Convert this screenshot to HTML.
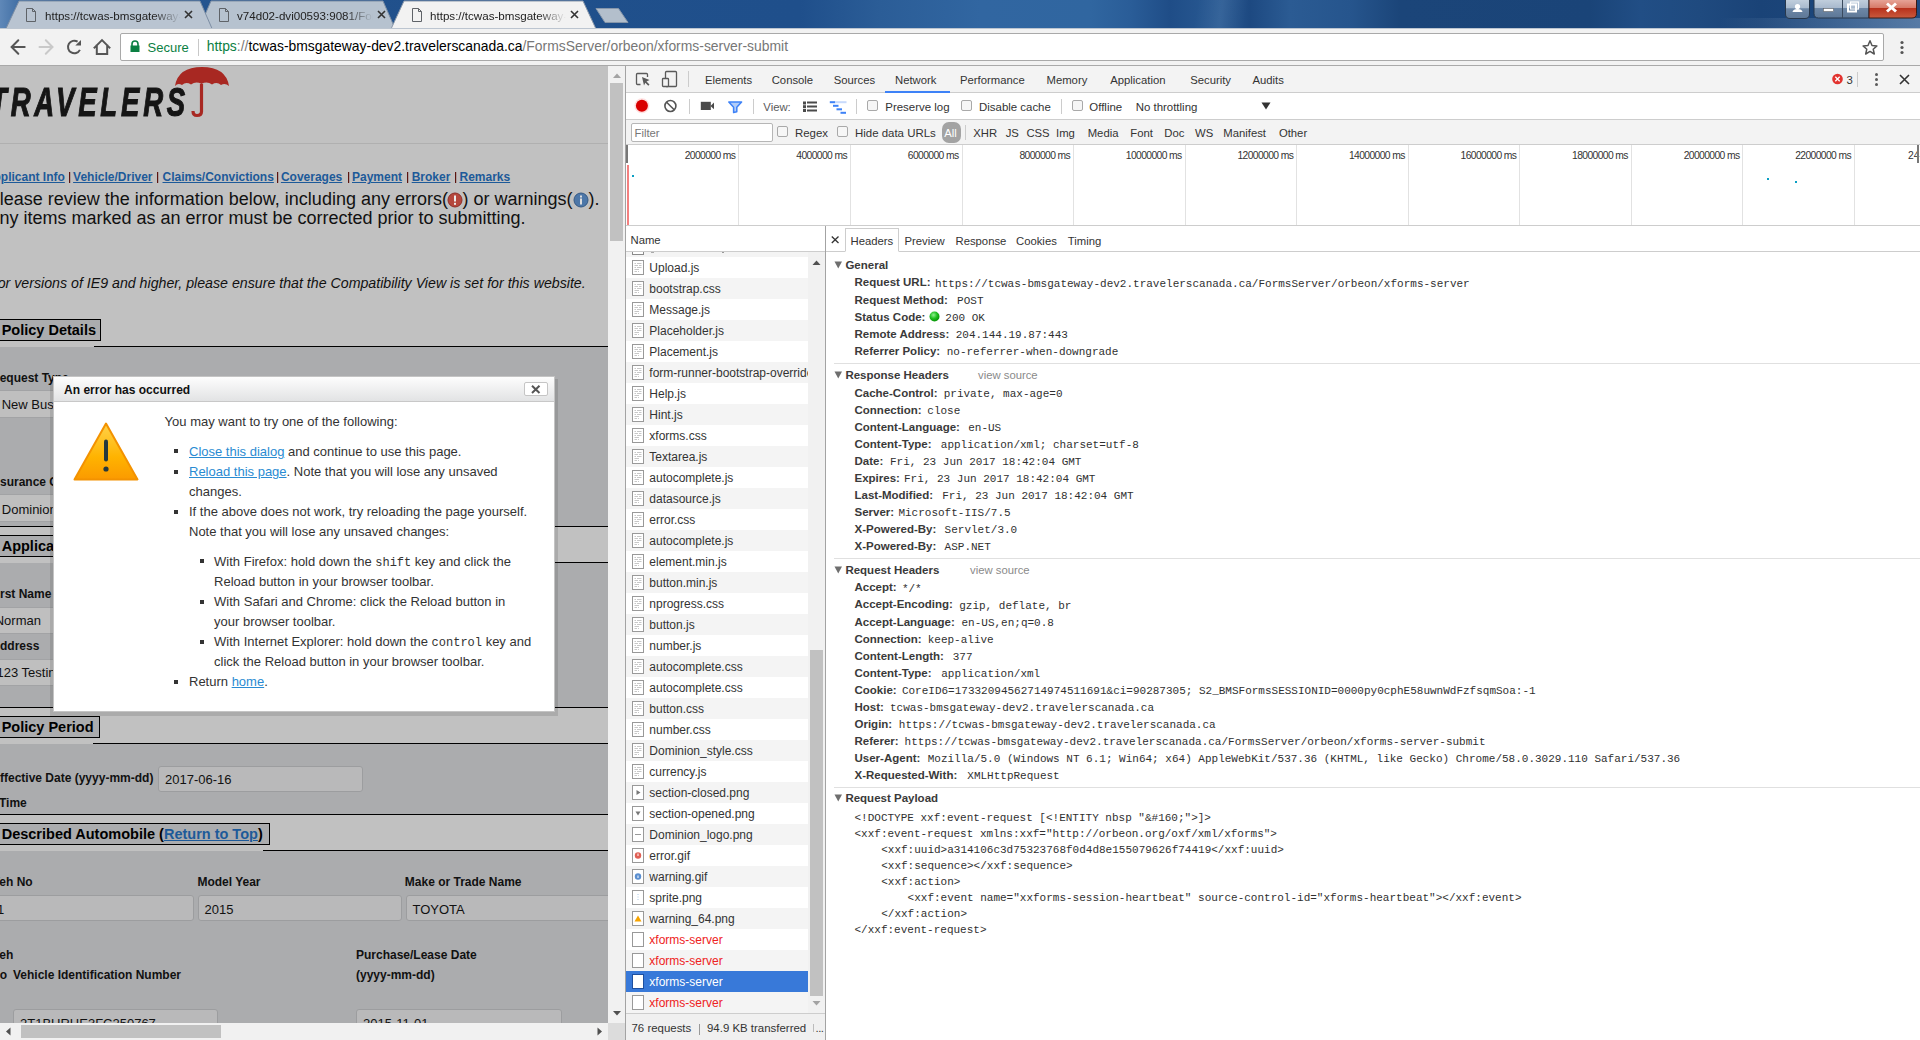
<!DOCTYPE html>
<html><head><meta charset="utf-8"><style>
html,body{margin:0;padding:0;}
body{width:1920px;height:1040px;overflow:hidden;position:relative;background:#fff;font-family:'Liberation Sans', sans-serif;}
body div{position:absolute;box-sizing:border-box;}
.t{white-space:pre;}
svg{position:absolute;overflow:visible;}
</style></head><body>
<div style="left:0px;top:0px;width:1920px;height:29px;background:linear-gradient(90deg,#5f88b8 0px,#3f6da3 20px,#2a5a94 60px,#21518c 300px,#1f4f8b 800px,#2b5d97 880px,#3166a1 980px,#3066a0 1090px,#2a5d98 1130px,#1f4d87 1170px,#2a5b94 1220px,#1d4981 1250px,#2b5b93 1290px,#26558d 1350px,#1b4579 1400px,#1a4478 1590px,#214e85 1640px,#1f4a7f 1700px,#1a4377 1760px,#1e4a80 1920px);"></div>
<div style="left:0px;top:0px;width:1920px;height:29px;background:linear-gradient(100deg,rgba(255,255,255,0) 0px,rgba(255,255,255,0) 1180px,rgba(255,255,255,.06) 1205px,rgba(255,255,255,0) 1230px);"></div>
<div style="left:1720px;top:18px;width:200px;height:11px;background:linear-gradient(90deg,rgba(120,150,185,0),rgba(125,155,190,.6));"></div>
<svg style="left:0;top:0" width="800" height="30">
<polygon points="199,28.5 211,1 383,1 395,28.5" fill="#b6c2cf" stroke="#7d8ea4" stroke-width="1"/>
<polygon points="6,28.5 19,1 200,1 212,28.5" fill="#b9c4d1" stroke="#7d8ea4" stroke-width="1"/>
<polygon points="391,29 404,1 583,1 596,29" fill="#f2f2f2" stroke="#8a98aa" stroke-width="1"/>
<polygon points="596,8.5 618.5,8.5 628,22.5 605,22.5" fill="#b3bfcc" stroke="#8797ab" stroke-width="1" stroke-linejoin="round"/>
</svg>
<svg style="left:25px;top:8px" width="12" height="14"><path d="M1.5,0.5 H7.5 L10.5,3.5 V13.5 H1.5 Z M7.5,0.5 V3.5 H10.5" fill="none" stroke="#5f6368" stroke-width="1"/></svg>
<svg style="left:218px;top:8px" width="12" height="14"><path d="M1.5,0.5 H7.5 L10.5,3.5 V13.5 H1.5 Z M7.5,0.5 V3.5 H10.5" fill="none" stroke="#5f6368" stroke-width="1"/></svg>
<svg style="left:411px;top:8px" width="12" height="14"><path d="M1.5,0.5 H7.5 L10.5,3.5 V13.5 H1.5 Z M7.5,0.5 V3.5 H10.5" fill="none" stroke="#5f6368" stroke-width="1"/></svg>
<div class="t" style="left:45px;top:10.38px;font-size:11.6px;line-height:11.6px;color:#222;font-weight:400;font-family:'Liberation Sans', sans-serif;width:136px;height:16px;overflow:hidden;-webkit-mask-image:linear-gradient(90deg,#000 0,#000 108px,transparent 136px);">https://tcwas-bmsgateway-dev2</div>
<div class="t" style="left:237px;top:10.38px;font-size:11.6px;line-height:11.6px;color:#222;font-weight:400;font-family:'Liberation Sans', sans-serif;width:136px;height:16px;overflow:hidden;-webkit-mask-image:linear-gradient(90deg,#000 0,#000 108px,transparent 136px);">v74d02-dvi00593:9081/FormsServer</div>
<div class="t" style="left:430px;top:10.38px;font-size:11.6px;line-height:11.6px;color:#222;font-weight:400;font-family:'Liberation Sans', sans-serif;width:136px;height:16px;overflow:hidden;-webkit-mask-image:linear-gradient(90deg,#000 0,#000 108px,transparent 136px);">https://tcwas-bmsgateway-dev2</div>
<svg style="left:184px;top:10px" width="10" height="10"><path d="M1,1 L8,8 M8,1 L1,8" stroke="#333" stroke-width="1.6"/></svg>
<svg style="left:377px;top:10px" width="10" height="10"><path d="M1,1 L8,8 M8,1 L1,8" stroke="#333" stroke-width="1.6"/></svg>
<svg style="left:570px;top:10px" width="10" height="10"><path d="M1,1 L8,8 M8,1 L1,8" stroke="#333" stroke-width="1.6"/></svg>
<svg style="left:1784px;top:0" width="136" height="20">
<defs>
<linearGradient id="wb" x1="0" y1="0" x2="0" y2="1"><stop offset="0" stop-color="#c3d0de"/><stop offset=".45" stop-color="#a9bace"/><stop offset=".5" stop-color="#6d87a6"/><stop offset="1" stop-color="#5d7796"/></linearGradient>
<linearGradient id="wr" x1="0" y1="0" x2="0" y2="1"><stop offset="0" stop-color="#e8a89c"/><stop offset=".45" stop-color="#d77b69"/><stop offset=".5" stop-color="#b8321c"/><stop offset="1" stop-color="#c95a3e"/></linearGradient>
</defs>
<path d="M1.5,-1 V14 Q1.5,18.5 6,18.5 H21 Q25.5,18.5 25.5,14 V-1" fill="url(#wb)" stroke="#28384c" stroke-width="1"/>
<path d="M30,-1 V13.5 Q30,18 34.5,18 H85 V-1 Z" fill="url(#wb)" stroke="#28384c" stroke-width="1"/>
<path d="M85,-1 V18 H128 Q132.5,18 132.5,13.5 V-1 Z" fill="url(#wr)" stroke="#3b1a14" stroke-width="1"/>
<line x1="58.5" y1="0" x2="58.5" y2="18" stroke="#3a4a5e" stroke-width="1"/>
<circle cx="13.5" cy="6.5" r="2.6" fill="#fff"/><path d="M8.5,12 Q9,9 13.5,9 Q18,9 18.5,12 Z" fill="#fff"/>
<rect x="39.5" y="8.5" width="10" height="3" fill="#fff" stroke="#555" stroke-width=".5"/>
<rect x="64" y="4.5" width="8" height="7" fill="none" stroke="#fff" stroke-width="2"/>
<rect x="66.5" y="2" width="8" height="7" fill="none" stroke="#fff" stroke-width="1.2"/>
<path d="M103,3.5 L112,11.5 M112,3.5 L103,11.5" stroke="#fff" stroke-width="3"/>
</svg>
<div style="left:0px;top:28px;width:1920px;height:38px;background:#f2f2f2;border-top:1px solid #bcc5d0;border-bottom:1px solid #a9a9a9;"></div>
<svg style="left:0;top:28px" width="120" height="38">
<path d="M24.7,19 H12 M18.3,12.3 L11.6,19 L18.3,25.7" stroke="#555" stroke-width="2" fill="none" stroke-linecap="round"/>
<path d="M39.5,19 H52.3 M45.8,12.3 L52.5,19 L45.8,25.7" stroke="#c9c9c9" stroke-width="2" fill="none" stroke-linecap="round"/>
<path d="M79.9,21.9 A6.3,6.3 0 1 1 77.6,13.6" stroke="#555" stroke-width="2" fill="none"/><path d="M75.3,17.6 L81,11.9 L81,17.6 Z" fill="#555"/>
<path d="M94.5,19.6 L102,12.1 L109.5,19.6 M96.8,17.6 V26 H107.2 V17.6" stroke="#555" stroke-width="2" fill="none" stroke-linejoin="miter" stroke-linecap="square"/>
</svg>
<div style="left:120px;top:33px;width:1763.5px;height:28px;background:#fff;border:1px solid #a9a9a9;border-radius:2px;"></div>
<svg style="left:129px;top:40px" width="12" height="13"><path d="M3,6 V4 A3,3 0 0 1 9,4 V6" stroke="#0b8043" stroke-width="1.6" fill="none"/><rect x="1.5" y="5.5" width="9" height="6.5" fill="#0b8043"/></svg>
<div class="t" style="left:147.5px;top:40.99px;font-size:13px;line-height:13px;color:#0b8043;font-weight:400;font-family:'Liberation Sans', sans-serif;">Secure</div>
<div style="left:198px;top:39px;width:1px;height:17px;background:#c8c8c8;"></div>
<div class="t" style="left:206.7px;top:40.23px;font-size:13.9px;line-height:13.9px;color:#000;"><span style="color:#0b8043">https</span><span style="color:#777">://</span>tcwas-bmsgateway-dev2.travelerscanada.ca<span style="color:#777">/FormsServer/orbeon/xforms-server-submit</span></div>
<svg style="left:1860px;top:38px" width="20" height="20"><path d="M10,2.8 L12,7.5 L16.9,7.9 L13.2,11.2 L14.3,16 L10,13.4 L5.7,16 L6.8,11.2 L3.1,7.9 L8,7.5 Z" fill="none" stroke="#555" stroke-width="1.5" stroke-linejoin="round"/></svg>
<svg style="left:1898.4px;top:38px" width="8" height="18"><circle cx="4" cy="4.5" r="1.6" fill="#555"/><circle cx="4" cy="9.5" r="1.6" fill="#555"/><circle cx="4" cy="14.5" r="1.6" fill="#555"/></svg>
<div style="left:0px;top:66px;width:608px;height:957px;background:#c1c1c1;overflow:hidden;"></div>
<div class="t" style="left:-10px;top:82.41px;font-size:40.5px;line-height:40.5px;color:#151515;font-weight:700;font-family:'Liberation Sans', sans-serif;transform:scaleX(0.68);transform-origin:0 0;letter-spacing:5.6px;font-style:italic;-webkit-text-stroke:1.1px #151515;">TRAVELERS</div>
<svg style="left:170px;top:64px" width="62" height="56">
<path d="M5,22 Q8,3 32,3 Q56,3 59,22 Q55,18.5 51,21 Q47,17.5 42,20.5 Q37,17 31.5,20 Q26,17 21,20.5 Q16,17.5 12,21 Q8,18.5 5,22 Z" fill="#a82822"/>
<path d="M31.5,20 V47.5 Q31.5,51.5 27,51.5 Q23,51.5 23,47" fill="none" stroke="#a82822" stroke-width="3.2"/>
</svg>
<div style="left:0px;top:143px;width:608px;height:1px;background:#b0b0b0;"></div>
<div class="t" style="left:-15.2px;top:170.84px;font-size:12px;line-height:12px;color:#1d5a99;font-weight:700;font-family:'Liberation Sans', sans-serif;text-decoration:underline;">Applicant Info</div>
<div class="t" style="left:73.1px;top:170.84px;font-size:12px;line-height:12px;color:#1d5a99;font-weight:700;font-family:'Liberation Sans', sans-serif;text-decoration:underline;">Vehicle/Driver</div>
<div class="t" style="left:162.5px;top:170.84px;font-size:12px;line-height:12px;color:#1d5a99;font-weight:700;font-family:'Liberation Sans', sans-serif;text-decoration:underline;">Claims/Convictions</div>
<div class="t" style="left:280.9px;top:170.84px;font-size:12px;line-height:12px;color:#1d5a99;font-weight:700;font-family:'Liberation Sans', sans-serif;text-decoration:underline;">Coverages</div>
<div class="t" style="left:352px;top:170.84px;font-size:12px;line-height:12px;color:#1d5a99;font-weight:700;font-family:'Liberation Sans', sans-serif;text-decoration:underline;">Payment</div>
<div class="t" style="left:411.7px;top:170.84px;font-size:12px;line-height:12px;color:#1d5a99;font-weight:700;font-family:'Liberation Sans', sans-serif;text-decoration:underline;">Broker</div>
<div class="t" style="left:459.5px;top:170.84px;font-size:12px;line-height:12px;color:#1d5a99;font-weight:700;font-family:'Liberation Sans', sans-serif;text-decoration:underline;">Remarks</div>
<div style="left:69px;top:172px;width:1px;height:11px;background:#5c1510;box-shadow:0.6px 0 0 rgba(92,21,16,.35);"></div>
<div style="left:157px;top:172px;width:1px;height:11px;background:#5c1510;box-shadow:0.6px 0 0 rgba(92,21,16,.35);"></div>
<div style="left:277px;top:172px;width:1px;height:11px;background:#5c1510;box-shadow:0.6px 0 0 rgba(92,21,16,.35);"></div>
<div style="left:348px;top:172px;width:1px;height:11px;background:#5c1510;box-shadow:0.6px 0 0 rgba(92,21,16,.35);"></div>
<div style="left:407px;top:172px;width:1px;height:11px;background:#5c1510;box-shadow:0.6px 0 0 rgba(92,21,16,.35);"></div>
<div style="left:455px;top:172px;width:1px;height:11px;background:#5c1510;box-shadow:0.6px 0 0 rgba(92,21,16,.35);"></div>
<div class="t" style="left:-12.3px;top:189.96px;font-size:18px;line-height:18px;color:#111;font-weight:400;font-family:'Liberation Sans', sans-serif;">Please review the information below, including any errors(</div>
<svg style="left:447px;top:192px" width="16" height="16"><circle cx="8" cy="8" r="7" fill="#b5473d" stroke="#8e2f28"/><rect x="7" y="3.5" width="2" height="6" fill="#eee"/><rect x="7" y="10.8" width="2" height="2" fill="#eee"/></svg>
<div class="t" style="left:462.5px;top:189.96px;font-size:18px;line-height:18px;color:#111;font-weight:400;font-family:'Liberation Sans', sans-serif;">) or warnings(</div>
<svg style="left:573px;top:192px" width="16" height="16"><circle cx="8" cy="8" r="7" fill="#4d77a8" stroke="#365a84"/><rect x="7" y="6.5" width="2" height="6" fill="#ddd"/><rect x="7" y="3.5" width="2" height="2" fill="#ddd"/></svg>
<div class="t" style="left:588.5px;top:189.96px;font-size:18px;line-height:18px;color:#111;font-weight:400;font-family:'Liberation Sans', sans-serif;">).</div>
<div class="t" style="left:-12.6px;top:209.46px;font-size:18px;line-height:18px;color:#111;font-weight:400;font-family:'Liberation Sans', sans-serif;">Any items marked as an error must be corrected prior to submitting.</div>
<div class="t" style="left:-11px;top:276.18px;font-size:14.2px;line-height:14.2px;color:#111;font-weight:400;font-family:'Liberation Sans', sans-serif;font-style:italic;">For versions of IE9 and higher, please ensure that the Compatibility View is set for this website.</div>
<div style="left:-2px;top:319px;width:103px;height:22px;background:#abacae;border:1px solid #000;"></div>
<div class="t" style="left:1.7px;top:323.02px;font-size:14.5px;line-height:14.5px;color:#000;font-weight:700;font-family:'Liberation Sans', sans-serif;">Policy Details</div>
<div style="left:94px;top:346px;width:514px;height:1px;background:#000;"></div>
<div style="left:0px;top:347px;width:608px;height:179.5px;background:#abacae;"></div>
<div class="t" style="left:-9px;top:371.84px;font-size:12px;line-height:12px;color:#111;font-weight:700;font-family:'Liberation Sans', sans-serif;">Request Type</div>
<div style="left:0px;top:390px;width:540px;height:1px;background:#a2a3a5;"></div>
<div style="left:0px;top:391px;width:540px;height:26.5px;background:#bfbfbf;"></div>
<div class="t" style="left:1.7px;top:398.09px;font-size:13px;line-height:13px;color:#111;font-weight:400;font-family:'Liberation Sans', sans-serif;">New Business</div>
<div style="left:0px;top:417px;width:540px;height:1px;background:#a2a3a5;"></div>
<div class="t" style="left:-10.7px;top:475.54px;font-size:12px;line-height:12px;color:#111;font-weight:700;font-family:'Liberation Sans', sans-serif;">Insurance Company</div>
<div style="left:0px;top:494px;width:540px;height:1px;background:#a2a3a5;"></div>
<div style="left:0px;top:495px;width:540px;height:26px;background:#bfbfbf;"></div>
<div class="t" style="left:1.8px;top:502.69px;font-size:13px;line-height:13px;color:#111;font-weight:400;font-family:'Liberation Sans', sans-serif;">Dominion of Canada</div>
<div style="left:0px;top:520.5px;width:540px;height:1px;background:#a2a3a5;"></div>
<div style="left:0px;top:526px;width:608px;height:1px;background:#000;"></div>
<div style="left:-2px;top:535px;width:202px;height:22px;background:#abacae;border:1px solid #000;"></div>
<div class="t" style="left:1.7px;top:539.02px;font-size:14.5px;line-height:14.5px;color:#000;font-weight:700;font-family:'Liberation Sans', sans-serif;">Applicant Information</div>
<div style="left:193px;top:562px;width:415px;height:1px;background:#000;"></div>
<div style="left:0px;top:563px;width:608px;height:144px;background:#abacae;"></div>
<div style="left:554px;top:562px;width:54px;height:1px;background:#000;"></div>
<div class="t" style="left:-10.7px;top:588.44px;font-size:12px;line-height:12px;color:#111;font-weight:700;font-family:'Liberation Sans', sans-serif;">First Name</div>
<div style="left:0px;top:606.5px;width:540px;height:1px;background:#a2a3a5;"></div>
<div style="left:0px;top:607.5px;width:540px;height:25.5px;background:#bfbfbf;"></div>
<div class="t" style="left:-5.3px;top:614.09px;font-size:13px;line-height:13px;color:#111;font-weight:400;font-family:'Liberation Sans', sans-serif;">Norman</div>
<div style="left:0px;top:633px;width:540px;height:1px;background:#a2a3a5;"></div>
<div class="t" style="left:-8.67px;top:639.74px;font-size:12px;line-height:12px;color:#111;font-weight:700;font-family:'Liberation Sans', sans-serif;">Address</div>
<div style="left:0px;top:658.5px;width:540px;height:1px;background:#a2a3a5;"></div>
<div style="left:0px;top:659.5px;width:540px;height:25.5px;background:#bfbfbf;"></div>
<div class="t" style="left:-3.5px;top:665.99px;font-size:13px;line-height:13px;color:#111;font-weight:400;font-family:'Liberation Sans', sans-serif;">123 Testing Street</div>
<div style="left:0px;top:685px;width:540px;height:1px;background:#a2a3a5;"></div>
<div style="left:0px;top:707px;width:608px;height:1px;background:#000;"></div>
<div style="left:-2px;top:716px;width:102px;height:22px;background:#abacae;border:1px solid #000;"></div>
<div class="t" style="left:1.7px;top:720.02px;font-size:14.5px;line-height:14.5px;color:#000;font-weight:700;font-family:'Liberation Sans', sans-serif;">Policy Period</div>
<div style="left:93px;top:743px;width:515px;height:1px;background:#000;"></div>
<div style="left:0px;top:744px;width:608px;height:70px;background:#abacae;"></div>
<div class="t" style="left:-8px;top:772.14px;font-size:12px;line-height:12px;color:#111;font-weight:700;font-family:'Liberation Sans', sans-serif;">Effective Date (yyyy-mm-dd)</div>
<div style="left:158.4px;top:765.7px;width:204.6px;height:26.3px;background:#b9b9ba;border:1px solid #9c9d9f;border-radius:3px;"></div>
<div class="t" style="left:165px;top:773.19px;font-size:13px;line-height:13px;color:#111;font-weight:400;font-family:'Liberation Sans', sans-serif;">2017-06-16</div>
<div class="t" style="left:-1px;top:796.84px;font-size:12px;line-height:12px;color:#111;font-weight:700;font-family:'Liberation Sans', sans-serif;">Time</div>
<div style="left:0px;top:814px;width:608px;height:1px;background:#000;"></div>
<div style="left:-2px;top:823px;width:272px;height:22px;background:#abacae;border:1px solid #000;"></div>
<div class="t" style="left:1.7px;top:827.02px;font-size:14.5px;line-height:14.5px;color:#000;font-weight:700;font-family:'Liberation Sans', sans-serif;">Described Automobile (<span style="color:#1d5a99;text-decoration:underline">Return to Top</span>)</div>
<div style="left:263px;top:850px;width:345px;height:1px;background:#000;"></div>
<div style="left:0px;top:851px;width:608px;height:172px;background:#abacae;"></div>
<div class="t" style="left:-8px;top:876.04px;font-size:12px;line-height:12px;color:#111;font-weight:700;font-family:'Liberation Sans', sans-serif;">Veh No</div>
<div class="t" style="left:197.4px;top:876.04px;font-size:12px;line-height:12px;color:#111;font-weight:700;font-family:'Liberation Sans', sans-serif;">Model Year</div>
<div class="t" style="left:404.8px;top:876.04px;font-size:12px;line-height:12px;color:#111;font-weight:700;font-family:'Liberation Sans', sans-serif;">Make or Trade Name</div>
<div style="left:-10px;top:895px;width:204.2px;height:26.4px;background:#b9b9ba;border:1px solid #9c9d9f;border-radius:3px;"></div>
<div class="t" style="left:-3px;top:902.69px;font-size:13px;line-height:13px;color:#111;font-weight:400;font-family:'Liberation Sans', sans-serif;">1</div>
<div style="left:197.5px;top:895px;width:204.5px;height:26.4px;background:#b9b9ba;border:1px solid #9c9d9f;border-radius:3px;"></div>
<div class="t" style="left:204.5px;top:902.69px;font-size:13px;line-height:13px;color:#111;font-weight:400;font-family:'Liberation Sans', sans-serif;">2015</div>
<div style="left:405.5px;top:895px;width:220px;height:26.4px;background:#b9b9ba;border:1px solid #9c9d9f;border-radius:3px;"></div>
<div class="t" style="left:412.5px;top:902.69px;font-size:13px;line-height:13px;color:#111;font-weight:400;font-family:'Liberation Sans', sans-serif;">TOYOTA</div>
<div class="t" style="left:-8px;top:948.54px;font-size:12px;line-height:12px;color:#111;font-weight:700;font-family:'Liberation Sans', sans-serif;">Veh</div>
<div class="t" style="left:-9px;top:968.54px;font-size:12px;line-height:12px;color:#111;font-weight:700;font-family:'Liberation Sans', sans-serif;">No</div>
<div class="t" style="left:13px;top:968.54px;font-size:12px;line-height:12px;color:#111;font-weight:700;font-family:'Liberation Sans', sans-serif;">Vehicle Identification Number</div>
<div class="t" style="left:356px;top:948.54px;font-size:12px;line-height:12px;color:#111;font-weight:700;font-family:'Liberation Sans', sans-serif;">Purchase/Lease Date</div>
<div class="t" style="left:356px;top:968.54px;font-size:12px;line-height:12px;color:#111;font-weight:700;font-family:'Liberation Sans', sans-serif;">(yyyy-mm-dd)</div>
<div style="left:13px;top:1009px;width:205.4px;height:30px;background:#b9b9ba;border:1px solid #9c9d9f;border-radius:3px;"></div>
<div class="t" style="left:20px;top:1016.69px;font-size:13px;line-height:13px;color:#111;font-weight:400;font-family:'Liberation Sans', sans-serif;">2T1BURHE3FC250767</div>
<div style="left:356px;top:1009px;width:205.5px;height:30px;background:#b9b9ba;border:1px solid #9c9d9f;border-radius:3px;"></div>
<div class="t" style="left:363px;top:1016.69px;font-size:13px;line-height:13px;color:#111;font-weight:400;font-family:'Liberation Sans', sans-serif;">2015-11-01</div>
<div style="left:50px;top:379px;width:508px;height:337px;background:rgba(0,0,0,0.11);"></div>
<div style="left:53px;top:376px;width:502px;height:336px;background:#fff;border:1px solid #c4c4c4;"></div>
<div style="left:54px;top:377px;width:500px;height:25px;background:linear-gradient(#fdfdfd,#e2e3e4);border-bottom:1px solid #c8c8c8;"></div>
<div class="t" style="left:64.1px;top:383.54px;font-size:12px;line-height:12px;color:#111;font-weight:700;font-family:'Liberation Sans', sans-serif;">An error has occurred</div>
<div style="left:523.5px;top:382.3px;width:24px;height:14.2px;background:#fff;border:1px solid #c5c5c5;border-radius:2px;"></div>
<svg style="left:531px;top:385px" width="10" height="9"><path d="M1,0.8 L8.5,8 M8.5,0.8 L1,8" stroke="#555" stroke-width="2"/></svg>
<svg style="left:72px;top:421px" width="68" height="62">
<defs><linearGradient id="wg" x1="0" y1="0" x2="0" y2="1"><stop offset="0" stop-color="#ffd24a"/><stop offset=".6" stop-color="#ffb300"/><stop offset="1" stop-color="#fb9a00"/></linearGradient></defs>
<path d="M34,2.5 L65.5,58.5 L2.5,58.5 Z" fill="url(#wg)" stroke="#f39200" stroke-width="2" stroke-linejoin="round"/>
<rect x="32" y="18.5" width="4" height="22" rx="2" fill="#25393d"/>
<circle cx="34" cy="48" r="2.6" fill="#25393d"/>
</svg>
<div class="t" style="left:164.6px;top:415.19px;font-size:13px;line-height:13px;color:#333;font-weight:400;font-family:'Liberation Sans', sans-serif;">You may want to try one of the following:</div>
<div style="left:174px;top:449.4px;width:4px;height:4px;background:#333;"></div>
<div style="left:174px;top:469.5px;width:4px;height:4px;background:#333;"></div>
<div style="left:174px;top:509.7px;width:4px;height:4px;background:#333;"></div>
<div style="left:174px;top:679.6px;width:4px;height:4px;background:#333;"></div>
<div style="left:200.3px;top:559.4px;width:4px;height:4px;background:#333;"></div>
<div style="left:200.3px;top:599.6px;width:4px;height:4px;background:#333;"></div>
<div style="left:200.3px;top:639.6px;width:4px;height:4px;background:#333;"></div>
<div class="t" style="left:189px;top:444.99px;font-size:13px;line-height:13px;color:#333;font-weight:400;font-family:'Liberation Sans', sans-serif;"><span style="color:#2a8bd2;text-decoration:underline">Close this dialog</span> and continue to use this page.</div>
<div class="t" style="left:189px;top:464.99px;font-size:13px;line-height:13px;color:#333;font-weight:400;font-family:'Liberation Sans', sans-serif;"><span style="color:#2a8bd2;text-decoration:underline">Reload this page</span>. Note that you will lose any unsaved</div>
<div class="t" style="left:189px;top:484.99px;font-size:13px;line-height:13px;color:#333;font-weight:400;font-family:'Liberation Sans', sans-serif;">changes.</div>
<div class="t" style="left:189px;top:504.99px;font-size:13px;line-height:13px;color:#333;font-weight:400;font-family:'Liberation Sans', sans-serif;">If the above does not work, try reloading the page yourself.</div>
<div class="t" style="left:189px;top:524.99px;font-size:13px;line-height:13px;color:#333;font-weight:400;font-family:'Liberation Sans', sans-serif;">Note that you will lose any unsaved changes:</div>
<div class="t" style="left:214.1px;top:554.99px;font-size:13px;line-height:13px;color:#333;font-weight:400;font-family:'Liberation Sans', sans-serif;">With Firefox: hold down the <span style="font-family:'Liberation Mono', monospace;font-size:12px">shift</span> key and click the</div>
<div class="t" style="left:214.1px;top:574.99px;font-size:13px;line-height:13px;color:#333;font-weight:400;font-family:'Liberation Sans', sans-serif;">Reload button in your browser toolbar.</div>
<div class="t" style="left:214.1px;top:594.99px;font-size:13px;line-height:13px;color:#333;font-weight:400;font-family:'Liberation Sans', sans-serif;">With Safari and Chrome: click the Reload button in</div>
<div class="t" style="left:214.1px;top:614.99px;font-size:13px;line-height:13px;color:#333;font-weight:400;font-family:'Liberation Sans', sans-serif;">your browser toolbar.</div>
<div class="t" style="left:214.1px;top:634.99px;font-size:13px;line-height:13px;color:#333;font-weight:400;font-family:'Liberation Sans', sans-serif;">With Internet Explorer: hold down the <span style="font-family:'Liberation Mono', monospace;font-size:12px">control</span> key and</div>
<div class="t" style="left:214.1px;top:654.99px;font-size:13px;line-height:13px;color:#333;font-weight:400;font-family:'Liberation Sans', sans-serif;">click the Reload button in your browser toolbar.</div>
<div class="t" style="left:189px;top:674.99px;font-size:13px;line-height:13px;color:#333;font-weight:400;font-family:'Liberation Sans', sans-serif;">Return <span style="color:#2a8bd2;text-decoration:underline">home</span>.</div>
<div style="left:608px;top:66px;width:18px;height:957px;background:#f1f1f1;"></div>
<svg style="left:608px;top:66px" width="18" height="18"><path d="M5,12 L9,7.5 L13,12 Z" fill="#a3a3a3"/></svg>
<div style="left:610px;top:83px;width:13px;height:157.5px;background:#c1c1c1;"></div>
<svg style="left:608px;top:1005px" width="18" height="18"><path d="M5,6 L9,10.5 L13,6 Z" fill="#505050"/></svg>
<div style="left:0px;top:1023px;width:626px;height:17px;background:#f1f1f1;"></div>
<div style="left:608px;top:1023px;width:17px;height:17px;background:#dcdcdc;"></div>
<svg style="left:0;top:1023px" width="18" height="17"><path d="M10.5,4.5 L6,8.5 L10.5,12.5 Z" fill="#505050"/></svg>
<div style="left:21px;top:1025px;width:200px;height:13px;background:#c1c1c1;"></div>
<svg style="left:590px;top:1023px" width="18" height="17"><path d="M7.5,4.5 L12,8.5 L7.5,12.5 Z" fill="#505050"/></svg>
<div style="left:625px;top:66px;width:1px;height:974px;background:#a3a3a3;"></div>
<div style="left:626px;top:66px;width:1294px;height:27px;background:#f3f3f3;border-bottom:1px solid #cdcdcd;"></div>
<svg style="left:634px;top:70px" width="50" height="20">
<path d="M6.5,14.5 H3.5 Q2.5,14.5 2.5,13.5 V4.5 Q2.5,3.5 3.5,3.5 H12.5 Q13.5,3.5 13.5,4.5 V7" fill="none" stroke="#5a5a5a" stroke-width="1.3"/>
<path d="M8,7 L15.5,10 L12.5,11.5 L15.5,14.5 L14.3,15.7 L11.3,12.7 L10,15.5 Z" fill="#5a5a5a"/>
<rect x="31.5" y="1.5" width="11" height="15" rx="1" fill="none" stroke="#5a5a5a" stroke-width="1.3"/>
<rect x="28.5" y="8.5" width="6" height="8" rx="0.8" fill="#f3f3f3" stroke="#5a5a5a" stroke-width="1.3"/>
</svg>
<div style="left:688px;top:71px;width:1px;height:16px;background:#ccc;"></div>
<div class="t" style="left:705px;top:74.63px;font-size:11.3px;line-height:11.3px;color:#333;font-weight:400;font-family:'Liberation Sans', sans-serif;">Elements</div>
<div class="t" style="left:771.7px;top:74.63px;font-size:11.3px;line-height:11.3px;color:#333;font-weight:400;font-family:'Liberation Sans', sans-serif;">Console</div>
<div class="t" style="left:833.7px;top:74.63px;font-size:11.3px;line-height:11.3px;color:#333;font-weight:400;font-family:'Liberation Sans', sans-serif;">Sources</div>
<div class="t" style="left:895px;top:74.63px;font-size:11.3px;line-height:11.3px;color:#333;font-weight:400;font-family:'Liberation Sans', sans-serif;">Network</div>
<div class="t" style="left:960px;top:74.63px;font-size:11.3px;line-height:11.3px;color:#333;font-weight:400;font-family:'Liberation Sans', sans-serif;">Performance</div>
<div class="t" style="left:1046.5px;top:74.63px;font-size:11.3px;line-height:11.3px;color:#333;font-weight:400;font-family:'Liberation Sans', sans-serif;">Memory</div>
<div class="t" style="left:1110.2px;top:74.63px;font-size:11.3px;line-height:11.3px;color:#333;font-weight:400;font-family:'Liberation Sans', sans-serif;">Application</div>
<div class="t" style="left:1190.2px;top:74.63px;font-size:11.3px;line-height:11.3px;color:#333;font-weight:400;font-family:'Liberation Sans', sans-serif;">Security</div>
<div class="t" style="left:1252.5px;top:74.63px;font-size:11.3px;line-height:11.3px;color:#333;font-weight:400;font-family:'Liberation Sans', sans-serif;">Audits</div>
<div style="left:885px;top:91px;width:65px;height:2px;background:#3e82f7;"></div>
<svg style="left:1832px;top:73px" width="12" height="12"><circle cx="5.5" cy="6" r="5.3" fill="#e2332f"/><path d="M3.3,3.8 L7.7,8.2 M7.7,3.8 L3.3,8.2" stroke="#fff" stroke-width="1.3"/></svg>
<div class="t" style="left:1846.5px;top:74.63px;font-size:11.3px;line-height:11.3px;color:#333;font-weight:400;font-family:'Liberation Sans', sans-serif;">3</div>
<div style="left:1857px;top:72px;width:1px;height:15px;background:#ccc;"></div>
<svg style="left:1873px;top:72px" width="8" height="16"><circle cx="3.5" cy="2.5" r="1.5" fill="#5a5a5a"/><circle cx="3.5" cy="7.5" r="1.5" fill="#5a5a5a"/><circle cx="3.5" cy="12.5" r="1.5" fill="#5a5a5a"/></svg>
<svg style="left:1899px;top:74px" width="12" height="12"><path d="M1,1 L10,10 M10,1 L1,10" stroke="#333" stroke-width="1.6"/></svg>
<div style="left:626px;top:93px;width:1294px;height:27px;background:#fff;border-bottom:1px solid #cdcdcd;"></div>
<svg style="left:630px;top:94px" width="240" height="24">
<circle cx="11.9" cy="11.7" r="7.5" fill="#ffdede"/>
<circle cx="11.9" cy="11.7" r="6" fill="#d90000"/>
<circle cx="40.4" cy="12" r="5.5" fill="none" stroke="#555" stroke-width="1.6"/><path d="M36.6,8.2 L44.2,15.8" stroke="#555" stroke-width="1.6"/>
<rect x="70.8" y="7.8" width="10" height="8.2" fill="#4a4a4a"/><path d="M80.5,11.9 L84,8.5 V15.3 Z" fill="#4a4a4a"/>
<path d="M98.8,8 H111.6 L106.8,13.2 V17.8 L103.6,18.6 V13.2 Z" fill="#b3cdf8" stroke="#3e82f7" stroke-width="1.5" stroke-linejoin="round"/>
<rect x="173" y="7.5" width="3" height="3" fill="#4a4a4a"/><rect x="177" y="7.5" width="10" height="2" fill="#4a4a4a"/>
<rect x="173" y="11.2" width="3" height="3" fill="#4a4a4a"/><rect x="177" y="11.5" width="10" height="2" fill="#4a4a4a"/>
<rect x="173" y="15" width="3" height="3" fill="#4a4a4a"/><rect x="177" y="15.5" width="10" height="2" fill="#4a4a4a"/>
<rect x="199.8" y="7.2" width="5.5" height="2" fill="#3e82f7"/><rect x="205.3" y="7.2" width="11.2" height="2" fill="#c8dafc"/>
<rect x="203" y="10.8" width="5.5" height="2" fill="#3e82f7"/><rect x="206.5" y="14.3" width="5.5" height="2" fill="#3e82f7"/><rect x="210.5" y="17.8" width="5.5" height="2" fill="#3e82f7"/>
</svg>
<div style="left:688.5px;top:98.5px;width:1px;height:15px;background:#ccc;"></div>
<div style="left:753.3px;top:98.5px;width:1px;height:15px;background:#ccc;"></div>
<div style="left:856.3px;top:98.5px;width:1px;height:15px;background:#ccc;"></div>
<div style="left:1060.7px;top:98.5px;width:1px;height:15px;background:#ccc;"></div>
<div class="t" style="left:763.3px;top:102.13px;font-size:11.3px;line-height:11.3px;color:#5a5a5a;font-weight:400;font-family:'Liberation Sans', sans-serif;">View:</div>
<div style="left:867px;top:100px;width:11px;height:11px;background:#f6f6f6;border:1px solid #a9a9a9;border-radius:2px;"></div>
<div class="t" style="left:885.3px;top:102.01px;font-size:11.45px;line-height:11.45px;color:#333;font-weight:400;font-family:'Liberation Sans', sans-serif;">Preserve log</div>
<div style="left:960.8px;top:100px;width:11px;height:11px;background:#f6f6f6;border:1px solid #a9a9a9;border-radius:2px;"></div>
<div class="t" style="left:979px;top:102.01px;font-size:11.45px;line-height:11.45px;color:#333;font-weight:400;font-family:'Liberation Sans', sans-serif;">Disable cache</div>
<div style="left:1071.7px;top:100px;width:11px;height:11px;background:#f6f6f6;border:1px solid #a9a9a9;border-radius:2px;"></div>
<div class="t" style="left:1089.3px;top:102.01px;font-size:11.45px;line-height:11.45px;color:#333;font-weight:400;font-family:'Liberation Sans', sans-serif;">Offline</div>
<div class="t" style="left:1135.7px;top:102.01px;font-size:11.45px;line-height:11.45px;color:#333;font-weight:400;font-family:'Liberation Sans', sans-serif;">No throttling</div>
<svg style="left:1261px;top:102px" width="10" height="8"><path d="M0.5,0.5 H9.5 L5,7.5 Z" fill="#333"/></svg>
<div style="left:626px;top:120px;width:1294px;height:25px;background:#f3f3f3;border-bottom:1px solid #cdcdcd;"></div>
<div style="left:631px;top:122.5px;width:141.5px;height:19px;background:#fff;border:1px solid #b6b6b6;border-radius:2px;"></div>
<div class="t" style="left:634.5px;top:128.13px;font-size:11.3px;line-height:11.3px;color:#777;font-weight:400;font-family:'Liberation Sans', sans-serif;">Filter</div>
<div style="left:777px;top:126.3px;width:11px;height:11px;background:#f6f6f6;border:1px solid #a9a9a9;border-radius:2px;"></div>
<div class="t" style="left:795px;top:128.01px;font-size:11.45px;line-height:11.45px;color:#333;font-weight:400;font-family:'Liberation Sans', sans-serif;">Regex</div>
<div style="left:837px;top:126.3px;width:11px;height:11px;background:#f6f6f6;border:1px solid #a9a9a9;border-radius:2px;"></div>
<div class="t" style="left:855px;top:128.01px;font-size:11.45px;line-height:11.45px;color:#333;font-weight:400;font-family:'Liberation Sans', sans-serif;">Hide data URLs</div>
<div style="left:942px;top:122.3px;width:19px;height:21.2px;background:#a3a3a3;border-radius:7px;"></div>
<div class="t" style="left:944.2px;top:128.13px;font-size:11.3px;line-height:11.3px;color:#fff;font-weight:400;font-family:'Liberation Sans', sans-serif;">All</div>
<div style="left:965.3px;top:125px;width:1px;height:15px;background:#ccc;"></div>
<div class="t" style="left:973.3px;top:128.43px;font-size:11.3px;line-height:11.3px;color:#333;font-weight:400;font-family:'Liberation Sans', sans-serif;">XHR</div>
<div class="t" style="left:1005.7px;top:128.43px;font-size:11.3px;line-height:11.3px;color:#333;font-weight:400;font-family:'Liberation Sans', sans-serif;">JS</div>
<div class="t" style="left:1026.4px;top:128.43px;font-size:11.3px;line-height:11.3px;color:#333;font-weight:400;font-family:'Liberation Sans', sans-serif;">CSS</div>
<div class="t" style="left:1056px;top:128.43px;font-size:11.3px;line-height:11.3px;color:#333;font-weight:400;font-family:'Liberation Sans', sans-serif;">Img</div>
<div class="t" style="left:1087.7px;top:128.43px;font-size:11.3px;line-height:11.3px;color:#333;font-weight:400;font-family:'Liberation Sans', sans-serif;">Media</div>
<div class="t" style="left:1130.3px;top:128.43px;font-size:11.3px;line-height:11.3px;color:#333;font-weight:400;font-family:'Liberation Sans', sans-serif;">Font</div>
<div class="t" style="left:1164.3px;top:128.43px;font-size:11.3px;line-height:11.3px;color:#333;font-weight:400;font-family:'Liberation Sans', sans-serif;">Doc</div>
<div class="t" style="left:1195px;top:128.43px;font-size:11.3px;line-height:11.3px;color:#333;font-weight:400;font-family:'Liberation Sans', sans-serif;">WS</div>
<div class="t" style="left:1223.3px;top:128.43px;font-size:11.3px;line-height:11.3px;color:#333;font-weight:400;font-family:'Liberation Sans', sans-serif;">Manifest</div>
<div class="t" style="left:1278.9px;top:128.43px;font-size:11.3px;line-height:11.3px;color:#333;font-weight:400;font-family:'Liberation Sans', sans-serif;">Other</div>
<div style="left:626px;top:145px;width:1294px;height:81px;background:#fff;border-bottom:1px solid #cdcdcd;"></div>
<div style="left:738.4px;top:145px;width:1px;height:80px;background:#e2e2e2;"></div>
<div class="t" style="left:635.4px;top:150.78px;font-size:10.3px;line-height:10.3px;color:#333;font-weight:400;font-family:'Liberation Sans', sans-serif;width:100px;text-align:right;letter-spacing:-0.6px;">2000000 ms</div>
<div style="left:849.96px;top:145px;width:1px;height:80px;background:#e2e2e2;"></div>
<div class="t" style="left:746.96px;top:150.78px;font-size:10.3px;line-height:10.3px;color:#333;font-weight:400;font-family:'Liberation Sans', sans-serif;width:100px;text-align:right;letter-spacing:-0.6px;">4000000 ms</div>
<div style="left:961.52px;top:145px;width:1px;height:80px;background:#e2e2e2;"></div>
<div class="t" style="left:858.52px;top:150.78px;font-size:10.3px;line-height:10.3px;color:#333;font-weight:400;font-family:'Liberation Sans', sans-serif;width:100px;text-align:right;letter-spacing:-0.6px;">6000000 ms</div>
<div style="left:1073.08px;top:145px;width:1px;height:80px;background:#e2e2e2;"></div>
<div class="t" style="left:970.0799999999999px;top:150.78px;font-size:10.3px;line-height:10.3px;color:#333;font-weight:400;font-family:'Liberation Sans', sans-serif;width:100px;text-align:right;letter-spacing:-0.6px;">8000000 ms</div>
<div style="left:1184.6399999999999px;top:145px;width:1px;height:80px;background:#e2e2e2;"></div>
<div class="t" style="left:1081.6399999999999px;top:150.78px;font-size:10.3px;line-height:10.3px;color:#333;font-weight:400;font-family:'Liberation Sans', sans-serif;width:100px;text-align:right;letter-spacing:-0.6px;">10000000 ms</div>
<div style="left:1296.1999999999998px;top:145px;width:1px;height:80px;background:#e2e2e2;"></div>
<div class="t" style="left:1193.1999999999998px;top:150.78px;font-size:10.3px;line-height:10.3px;color:#333;font-weight:400;font-family:'Liberation Sans', sans-serif;width:100px;text-align:right;letter-spacing:-0.6px;">12000000 ms</div>
<div style="left:1407.76px;top:145px;width:1px;height:80px;background:#e2e2e2;"></div>
<div class="t" style="left:1304.76px;top:150.78px;font-size:10.3px;line-height:10.3px;color:#333;font-weight:400;font-family:'Liberation Sans', sans-serif;width:100px;text-align:right;letter-spacing:-0.6px;">14000000 ms</div>
<div style="left:1519.3200000000002px;top:145px;width:1px;height:80px;background:#e2e2e2;"></div>
<div class="t" style="left:1416.3200000000002px;top:150.78px;font-size:10.3px;line-height:10.3px;color:#333;font-weight:400;font-family:'Liberation Sans', sans-serif;width:100px;text-align:right;letter-spacing:-0.6px;">16000000 ms</div>
<div style="left:1630.88px;top:145px;width:1px;height:80px;background:#e2e2e2;"></div>
<div class="t" style="left:1527.88px;top:150.78px;font-size:10.3px;line-height:10.3px;color:#333;font-weight:400;font-family:'Liberation Sans', sans-serif;width:100px;text-align:right;letter-spacing:-0.6px;">18000000 ms</div>
<div style="left:1742.44px;top:145px;width:1px;height:80px;background:#e2e2e2;"></div>
<div class="t" style="left:1639.44px;top:150.78px;font-size:10.3px;line-height:10.3px;color:#333;font-weight:400;font-family:'Liberation Sans', sans-serif;width:100px;text-align:right;letter-spacing:-0.6px;">20000000 ms</div>
<div style="left:1854.0px;top:145px;width:1px;height:80px;background:#e2e2e2;"></div>
<div class="t" style="left:1751.0px;top:150.78px;font-size:10.3px;line-height:10.3px;color:#333;font-weight:400;font-family:'Liberation Sans', sans-serif;width:100px;text-align:right;letter-spacing:-0.6px;">22000000 ms</div>
<div class="t" style="left:1908px;top:150.78px;font-size:10.3px;line-height:10.3px;color:#333;font-weight:400;font-family:'Liberation Sans', sans-serif;">24</div>
<div style="left:626px;top:145px;width:2px;height:18px;background:#777;"></div>
<div style="left:626.5px;top:165px;width:2px;height:60px;background:#f48080;"></div>
<div style="left:1917px;top:145px;width:2px;height:18px;background:#777;"></div>
<div style="left:632px;top:175px;width:2px;height:2px;background:#0a9fc4;"></div>
<div style="left:1767px;top:178px;width:2px;height:2px;background:#0a9fc4;"></div>
<div style="left:1794.5px;top:181px;width:2px;height:2px;background:#0a9fc4;"></div>
<div style="left:626px;top:226px;width:199.5px;height:26px;background:#fff;border-bottom:1px solid #cdcdcd;"></div>
<div class="t" style="left:630.5px;top:234.73px;font-size:11.3px;line-height:11.3px;color:#333;font-weight:400;font-family:'Liberation Sans', sans-serif;">Name</div>
<div style="left:825px;top:226px;width:1px;height:814px;background:#a3a3a3;"></div>
<div style="left:626px;top:252px;width:182px;height:5px;background:#fff;overflow:hidden;"></div>
<div style="left:626px;top:257px;width:182px;height:21px;background:#fff;overflow:hidden;"></div>
<svg style="left:632px;top:260px" width="13" height="16"><rect x="0.5" y="0.5" width="11" height="14" fill="#fff" stroke="#999" stroke-width="1"/><path d="M2.5,3.5 H4 M5,3.5 H9.5 M2.5,5.5 H6 M7,5.5 H9.5 M2.5,7.5 H4 M5,7.5 H9.5 M2.5,9.5 H7 M2.5,11.5 H5 M6,11.5 H7" stroke="#c8c8c8" stroke-width="1"/></svg>
<div class="t" style="left:649.3px;top:261.74px;font-size:12px;line-height:12px;color:#333;font-weight:400;font-family:'Liberation Sans', sans-serif;width:158.5px;height:17px;overflow:hidden;">Upload.js</div>
<div style="left:626px;top:278px;width:182px;height:21px;background:#f4f4f4;overflow:hidden;"></div>
<svg style="left:632px;top:281px" width="13" height="16"><rect x="0.5" y="0.5" width="11" height="14" fill="#fff" stroke="#999" stroke-width="1"/><path d="M2.5,3.5 H4 M5,3.5 H9.5 M2.5,5.5 H6 M7,5.5 H9.5 M2.5,7.5 H4 M5,7.5 H9.5 M2.5,9.5 H7 M2.5,11.5 H5 M6,11.5 H7" stroke="#c8c8c8" stroke-width="1"/></svg>
<div class="t" style="left:649.3px;top:282.74px;font-size:12px;line-height:12px;color:#333;font-weight:400;font-family:'Liberation Sans', sans-serif;width:158.5px;height:17px;overflow:hidden;">bootstrap.css</div>
<div style="left:626px;top:299px;width:182px;height:21px;background:#fff;overflow:hidden;"></div>
<svg style="left:632px;top:302px" width="13" height="16"><rect x="0.5" y="0.5" width="11" height="14" fill="#fff" stroke="#999" stroke-width="1"/><path d="M2.5,3.5 H4 M5,3.5 H9.5 M2.5,5.5 H6 M7,5.5 H9.5 M2.5,7.5 H4 M5,7.5 H9.5 M2.5,9.5 H7 M2.5,11.5 H5 M6,11.5 H7" stroke="#c8c8c8" stroke-width="1"/></svg>
<div class="t" style="left:649.3px;top:303.74px;font-size:12px;line-height:12px;color:#333;font-weight:400;font-family:'Liberation Sans', sans-serif;width:158.5px;height:17px;overflow:hidden;">Message.js</div>
<div style="left:626px;top:320px;width:182px;height:21px;background:#f4f4f4;overflow:hidden;"></div>
<svg style="left:632px;top:323px" width="13" height="16"><rect x="0.5" y="0.5" width="11" height="14" fill="#fff" stroke="#999" stroke-width="1"/><path d="M2.5,3.5 H4 M5,3.5 H9.5 M2.5,5.5 H6 M7,5.5 H9.5 M2.5,7.5 H4 M5,7.5 H9.5 M2.5,9.5 H7 M2.5,11.5 H5 M6,11.5 H7" stroke="#c8c8c8" stroke-width="1"/></svg>
<div class="t" style="left:649.3px;top:324.74px;font-size:12px;line-height:12px;color:#333;font-weight:400;font-family:'Liberation Sans', sans-serif;width:158.5px;height:17px;overflow:hidden;">Placeholder.js</div>
<div style="left:626px;top:341px;width:182px;height:21px;background:#fff;overflow:hidden;"></div>
<svg style="left:632px;top:344px" width="13" height="16"><rect x="0.5" y="0.5" width="11" height="14" fill="#fff" stroke="#999" stroke-width="1"/><path d="M2.5,3.5 H4 M5,3.5 H9.5 M2.5,5.5 H6 M7,5.5 H9.5 M2.5,7.5 H4 M5,7.5 H9.5 M2.5,9.5 H7 M2.5,11.5 H5 M6,11.5 H7" stroke="#c8c8c8" stroke-width="1"/></svg>
<div class="t" style="left:649.3px;top:345.74px;font-size:12px;line-height:12px;color:#333;font-weight:400;font-family:'Liberation Sans', sans-serif;width:158.5px;height:17px;overflow:hidden;">Placement.js</div>
<div style="left:626px;top:362px;width:182px;height:21px;background:#f4f4f4;overflow:hidden;"></div>
<svg style="left:632px;top:365px" width="13" height="16"><rect x="0.5" y="0.5" width="11" height="14" fill="#fff" stroke="#999" stroke-width="1"/><path d="M2.5,3.5 H4 M5,3.5 H9.5 M2.5,5.5 H6 M7,5.5 H9.5 M2.5,7.5 H4 M5,7.5 H9.5 M2.5,9.5 H7 M2.5,11.5 H5 M6,11.5 H7" stroke="#c8c8c8" stroke-width="1"/></svg>
<div class="t" style="left:649.3px;top:366.74px;font-size:12px;line-height:12px;color:#333;font-weight:400;font-family:'Liberation Sans', sans-serif;width:158.5px;height:17px;overflow:hidden;">form-runner-bootstrap-override</div>
<div style="left:626px;top:383px;width:182px;height:21px;background:#fff;overflow:hidden;"></div>
<svg style="left:632px;top:386px" width="13" height="16"><rect x="0.5" y="0.5" width="11" height="14" fill="#fff" stroke="#999" stroke-width="1"/><path d="M2.5,3.5 H4 M5,3.5 H9.5 M2.5,5.5 H6 M7,5.5 H9.5 M2.5,7.5 H4 M5,7.5 H9.5 M2.5,9.5 H7 M2.5,11.5 H5 M6,11.5 H7" stroke="#c8c8c8" stroke-width="1"/></svg>
<div class="t" style="left:649.3px;top:387.74px;font-size:12px;line-height:12px;color:#333;font-weight:400;font-family:'Liberation Sans', sans-serif;width:158.5px;height:17px;overflow:hidden;">Help.js</div>
<div style="left:626px;top:404px;width:182px;height:21px;background:#f4f4f4;overflow:hidden;"></div>
<svg style="left:632px;top:407px" width="13" height="16"><rect x="0.5" y="0.5" width="11" height="14" fill="#fff" stroke="#999" stroke-width="1"/><path d="M2.5,3.5 H4 M5,3.5 H9.5 M2.5,5.5 H6 M7,5.5 H9.5 M2.5,7.5 H4 M5,7.5 H9.5 M2.5,9.5 H7 M2.5,11.5 H5 M6,11.5 H7" stroke="#c8c8c8" stroke-width="1"/></svg>
<div class="t" style="left:649.3px;top:408.74px;font-size:12px;line-height:12px;color:#333;font-weight:400;font-family:'Liberation Sans', sans-serif;width:158.5px;height:17px;overflow:hidden;">Hint.js</div>
<div style="left:626px;top:425px;width:182px;height:21px;background:#fff;overflow:hidden;"></div>
<svg style="left:632px;top:428px" width="13" height="16"><rect x="0.5" y="0.5" width="11" height="14" fill="#fff" stroke="#999" stroke-width="1"/><path d="M2.5,3.5 H4 M5,3.5 H9.5 M2.5,5.5 H6 M7,5.5 H9.5 M2.5,7.5 H4 M5,7.5 H9.5 M2.5,9.5 H7 M2.5,11.5 H5 M6,11.5 H7" stroke="#c8c8c8" stroke-width="1"/></svg>
<div class="t" style="left:649.3px;top:429.74px;font-size:12px;line-height:12px;color:#333;font-weight:400;font-family:'Liberation Sans', sans-serif;width:158.5px;height:17px;overflow:hidden;">xforms.css</div>
<div style="left:626px;top:446px;width:182px;height:21px;background:#f4f4f4;overflow:hidden;"></div>
<svg style="left:632px;top:449px" width="13" height="16"><rect x="0.5" y="0.5" width="11" height="14" fill="#fff" stroke="#999" stroke-width="1"/><path d="M2.5,3.5 H4 M5,3.5 H9.5 M2.5,5.5 H6 M7,5.5 H9.5 M2.5,7.5 H4 M5,7.5 H9.5 M2.5,9.5 H7 M2.5,11.5 H5 M6,11.5 H7" stroke="#c8c8c8" stroke-width="1"/></svg>
<div class="t" style="left:649.3px;top:450.74px;font-size:12px;line-height:12px;color:#333;font-weight:400;font-family:'Liberation Sans', sans-serif;width:158.5px;height:17px;overflow:hidden;">Textarea.js</div>
<div style="left:626px;top:467px;width:182px;height:21px;background:#fff;overflow:hidden;"></div>
<svg style="left:632px;top:470px" width="13" height="16"><rect x="0.5" y="0.5" width="11" height="14" fill="#fff" stroke="#999" stroke-width="1"/><path d="M2.5,3.5 H4 M5,3.5 H9.5 M2.5,5.5 H6 M7,5.5 H9.5 M2.5,7.5 H4 M5,7.5 H9.5 M2.5,9.5 H7 M2.5,11.5 H5 M6,11.5 H7" stroke="#c8c8c8" stroke-width="1"/></svg>
<div class="t" style="left:649.3px;top:471.74px;font-size:12px;line-height:12px;color:#333;font-weight:400;font-family:'Liberation Sans', sans-serif;width:158.5px;height:17px;overflow:hidden;">autocomplete.js</div>
<div style="left:626px;top:488px;width:182px;height:21px;background:#f4f4f4;overflow:hidden;"></div>
<svg style="left:632px;top:491px" width="13" height="16"><rect x="0.5" y="0.5" width="11" height="14" fill="#fff" stroke="#999" stroke-width="1"/><path d="M2.5,3.5 H4 M5,3.5 H9.5 M2.5,5.5 H6 M7,5.5 H9.5 M2.5,7.5 H4 M5,7.5 H9.5 M2.5,9.5 H7 M2.5,11.5 H5 M6,11.5 H7" stroke="#c8c8c8" stroke-width="1"/></svg>
<div class="t" style="left:649.3px;top:492.74px;font-size:12px;line-height:12px;color:#333;font-weight:400;font-family:'Liberation Sans', sans-serif;width:158.5px;height:17px;overflow:hidden;">datasource.js</div>
<div style="left:626px;top:509px;width:182px;height:21px;background:#fff;overflow:hidden;"></div>
<svg style="left:632px;top:512px" width="13" height="16"><rect x="0.5" y="0.5" width="11" height="14" fill="#fff" stroke="#999" stroke-width="1"/><path d="M2.5,3.5 H4 M5,3.5 H9.5 M2.5,5.5 H6 M7,5.5 H9.5 M2.5,7.5 H4 M5,7.5 H9.5 M2.5,9.5 H7 M2.5,11.5 H5 M6,11.5 H7" stroke="#c8c8c8" stroke-width="1"/></svg>
<div class="t" style="left:649.3px;top:513.74px;font-size:12px;line-height:12px;color:#333;font-weight:400;font-family:'Liberation Sans', sans-serif;width:158.5px;height:17px;overflow:hidden;">error.css</div>
<div style="left:626px;top:530px;width:182px;height:21px;background:#f4f4f4;overflow:hidden;"></div>
<svg style="left:632px;top:533px" width="13" height="16"><rect x="0.5" y="0.5" width="11" height="14" fill="#fff" stroke="#999" stroke-width="1"/><path d="M2.5,3.5 H4 M5,3.5 H9.5 M2.5,5.5 H6 M7,5.5 H9.5 M2.5,7.5 H4 M5,7.5 H9.5 M2.5,9.5 H7 M2.5,11.5 H5 M6,11.5 H7" stroke="#c8c8c8" stroke-width="1"/></svg>
<div class="t" style="left:649.3px;top:534.74px;font-size:12px;line-height:12px;color:#333;font-weight:400;font-family:'Liberation Sans', sans-serif;width:158.5px;height:17px;overflow:hidden;">autocomplete.js</div>
<div style="left:626px;top:551px;width:182px;height:21px;background:#fff;overflow:hidden;"></div>
<svg style="left:632px;top:554px" width="13" height="16"><rect x="0.5" y="0.5" width="11" height="14" fill="#fff" stroke="#999" stroke-width="1"/><path d="M2.5,3.5 H4 M5,3.5 H9.5 M2.5,5.5 H6 M7,5.5 H9.5 M2.5,7.5 H4 M5,7.5 H9.5 M2.5,9.5 H7 M2.5,11.5 H5 M6,11.5 H7" stroke="#c8c8c8" stroke-width="1"/></svg>
<div class="t" style="left:649.3px;top:555.74px;font-size:12px;line-height:12px;color:#333;font-weight:400;font-family:'Liberation Sans', sans-serif;width:158.5px;height:17px;overflow:hidden;">element.min.js</div>
<div style="left:626px;top:572px;width:182px;height:21px;background:#f4f4f4;overflow:hidden;"></div>
<svg style="left:632px;top:575px" width="13" height="16"><rect x="0.5" y="0.5" width="11" height="14" fill="#fff" stroke="#999" stroke-width="1"/><path d="M2.5,3.5 H4 M5,3.5 H9.5 M2.5,5.5 H6 M7,5.5 H9.5 M2.5,7.5 H4 M5,7.5 H9.5 M2.5,9.5 H7 M2.5,11.5 H5 M6,11.5 H7" stroke="#c8c8c8" stroke-width="1"/></svg>
<div class="t" style="left:649.3px;top:576.74px;font-size:12px;line-height:12px;color:#333;font-weight:400;font-family:'Liberation Sans', sans-serif;width:158.5px;height:17px;overflow:hidden;">button.min.js</div>
<div style="left:626px;top:593px;width:182px;height:21px;background:#fff;overflow:hidden;"></div>
<svg style="left:632px;top:596px" width="13" height="16"><rect x="0.5" y="0.5" width="11" height="14" fill="#fff" stroke="#999" stroke-width="1"/><path d="M2.5,3.5 H4 M5,3.5 H9.5 M2.5,5.5 H6 M7,5.5 H9.5 M2.5,7.5 H4 M5,7.5 H9.5 M2.5,9.5 H7 M2.5,11.5 H5 M6,11.5 H7" stroke="#c8c8c8" stroke-width="1"/></svg>
<div class="t" style="left:649.3px;top:597.74px;font-size:12px;line-height:12px;color:#333;font-weight:400;font-family:'Liberation Sans', sans-serif;width:158.5px;height:17px;overflow:hidden;">nprogress.css</div>
<div style="left:626px;top:614px;width:182px;height:21px;background:#f4f4f4;overflow:hidden;"></div>
<svg style="left:632px;top:617px" width="13" height="16"><rect x="0.5" y="0.5" width="11" height="14" fill="#fff" stroke="#999" stroke-width="1"/><path d="M2.5,3.5 H4 M5,3.5 H9.5 M2.5,5.5 H6 M7,5.5 H9.5 M2.5,7.5 H4 M5,7.5 H9.5 M2.5,9.5 H7 M2.5,11.5 H5 M6,11.5 H7" stroke="#c8c8c8" stroke-width="1"/></svg>
<div class="t" style="left:649.3px;top:618.74px;font-size:12px;line-height:12px;color:#333;font-weight:400;font-family:'Liberation Sans', sans-serif;width:158.5px;height:17px;overflow:hidden;">button.js</div>
<div style="left:626px;top:635px;width:182px;height:21px;background:#fff;overflow:hidden;"></div>
<svg style="left:632px;top:638px" width="13" height="16"><rect x="0.5" y="0.5" width="11" height="14" fill="#fff" stroke="#999" stroke-width="1"/><path d="M2.5,3.5 H4 M5,3.5 H9.5 M2.5,5.5 H6 M7,5.5 H9.5 M2.5,7.5 H4 M5,7.5 H9.5 M2.5,9.5 H7 M2.5,11.5 H5 M6,11.5 H7" stroke="#c8c8c8" stroke-width="1"/></svg>
<div class="t" style="left:649.3px;top:639.74px;font-size:12px;line-height:12px;color:#333;font-weight:400;font-family:'Liberation Sans', sans-serif;width:158.5px;height:17px;overflow:hidden;">number.js</div>
<div style="left:626px;top:656px;width:182px;height:21px;background:#f4f4f4;overflow:hidden;"></div>
<svg style="left:632px;top:659px" width="13" height="16"><rect x="0.5" y="0.5" width="11" height="14" fill="#fff" stroke="#999" stroke-width="1"/><path d="M2.5,3.5 H4 M5,3.5 H9.5 M2.5,5.5 H6 M7,5.5 H9.5 M2.5,7.5 H4 M5,7.5 H9.5 M2.5,9.5 H7 M2.5,11.5 H5 M6,11.5 H7" stroke="#c8c8c8" stroke-width="1"/></svg>
<div class="t" style="left:649.3px;top:660.74px;font-size:12px;line-height:12px;color:#333;font-weight:400;font-family:'Liberation Sans', sans-serif;width:158.5px;height:17px;overflow:hidden;">autocomplete.css</div>
<div style="left:626px;top:677px;width:182px;height:21px;background:#fff;overflow:hidden;"></div>
<svg style="left:632px;top:680px" width="13" height="16"><rect x="0.5" y="0.5" width="11" height="14" fill="#fff" stroke="#999" stroke-width="1"/><path d="M2.5,3.5 H4 M5,3.5 H9.5 M2.5,5.5 H6 M7,5.5 H9.5 M2.5,7.5 H4 M5,7.5 H9.5 M2.5,9.5 H7 M2.5,11.5 H5 M6,11.5 H7" stroke="#c8c8c8" stroke-width="1"/></svg>
<div class="t" style="left:649.3px;top:681.74px;font-size:12px;line-height:12px;color:#333;font-weight:400;font-family:'Liberation Sans', sans-serif;width:158.5px;height:17px;overflow:hidden;">autocomplete.css</div>
<div style="left:626px;top:698px;width:182px;height:21px;background:#f4f4f4;overflow:hidden;"></div>
<svg style="left:632px;top:701px" width="13" height="16"><rect x="0.5" y="0.5" width="11" height="14" fill="#fff" stroke="#999" stroke-width="1"/><path d="M2.5,3.5 H4 M5,3.5 H9.5 M2.5,5.5 H6 M7,5.5 H9.5 M2.5,7.5 H4 M5,7.5 H9.5 M2.5,9.5 H7 M2.5,11.5 H5 M6,11.5 H7" stroke="#c8c8c8" stroke-width="1"/></svg>
<div class="t" style="left:649.3px;top:702.74px;font-size:12px;line-height:12px;color:#333;font-weight:400;font-family:'Liberation Sans', sans-serif;width:158.5px;height:17px;overflow:hidden;">button.css</div>
<div style="left:626px;top:719px;width:182px;height:21px;background:#fff;overflow:hidden;"></div>
<svg style="left:632px;top:722px" width="13" height="16"><rect x="0.5" y="0.5" width="11" height="14" fill="#fff" stroke="#999" stroke-width="1"/><path d="M2.5,3.5 H4 M5,3.5 H9.5 M2.5,5.5 H6 M7,5.5 H9.5 M2.5,7.5 H4 M5,7.5 H9.5 M2.5,9.5 H7 M2.5,11.5 H5 M6,11.5 H7" stroke="#c8c8c8" stroke-width="1"/></svg>
<div class="t" style="left:649.3px;top:723.74px;font-size:12px;line-height:12px;color:#333;font-weight:400;font-family:'Liberation Sans', sans-serif;width:158.5px;height:17px;overflow:hidden;">number.css</div>
<div style="left:626px;top:740px;width:182px;height:21px;background:#f4f4f4;overflow:hidden;"></div>
<svg style="left:632px;top:743px" width="13" height="16"><rect x="0.5" y="0.5" width="11" height="14" fill="#fff" stroke="#999" stroke-width="1"/><path d="M2.5,3.5 H4 M5,3.5 H9.5 M2.5,5.5 H6 M7,5.5 H9.5 M2.5,7.5 H4 M5,7.5 H9.5 M2.5,9.5 H7 M2.5,11.5 H5 M6,11.5 H7" stroke="#c8c8c8" stroke-width="1"/></svg>
<div class="t" style="left:649.3px;top:744.74px;font-size:12px;line-height:12px;color:#333;font-weight:400;font-family:'Liberation Sans', sans-serif;width:158.5px;height:17px;overflow:hidden;">Dominion_style.css</div>
<div style="left:626px;top:761px;width:182px;height:21px;background:#fff;overflow:hidden;"></div>
<svg style="left:632px;top:764px" width="13" height="16"><rect x="0.5" y="0.5" width="11" height="14" fill="#fff" stroke="#999" stroke-width="1"/><path d="M2.5,3.5 H4 M5,3.5 H9.5 M2.5,5.5 H6 M7,5.5 H9.5 M2.5,7.5 H4 M5,7.5 H9.5 M2.5,9.5 H7 M2.5,11.5 H5 M6,11.5 H7" stroke="#c8c8c8" stroke-width="1"/></svg>
<div class="t" style="left:649.3px;top:765.74px;font-size:12px;line-height:12px;color:#333;font-weight:400;font-family:'Liberation Sans', sans-serif;width:158.5px;height:17px;overflow:hidden;">currency.js</div>
<div style="left:626px;top:782px;width:182px;height:21px;background:#f4f4f4;overflow:hidden;"></div>
<svg style="left:632px;top:785px" width="13" height="16"><rect x="0.5" y="0.5" width="11" height="14" fill="#fff" stroke="#999" stroke-width="1"/><path d="M4.5,5 L8.5,7.5 L4.5,10 Z" fill="#777"/></svg>
<div class="t" style="left:649.3px;top:786.74px;font-size:12px;line-height:12px;color:#333;font-weight:400;font-family:'Liberation Sans', sans-serif;width:158.5px;height:17px;overflow:hidden;">section-closed.png</div>
<div style="left:626px;top:803px;width:182px;height:21px;background:#fff;overflow:hidden;"></div>
<svg style="left:632px;top:806px" width="13" height="16"><rect x="0.5" y="0.5" width="11" height="14" fill="#fff" stroke="#999" stroke-width="1"/><path d="M3.5,5.5 L8.5,5.5 L6,9.5 Z" fill="#777"/></svg>
<div class="t" style="left:649.3px;top:807.74px;font-size:12px;line-height:12px;color:#333;font-weight:400;font-family:'Liberation Sans', sans-serif;width:158.5px;height:17px;overflow:hidden;">section-opened.png</div>
<div style="left:626px;top:824px;width:182px;height:21px;background:#f4f4f4;overflow:hidden;"></div>
<svg style="left:632px;top:827px" width="13" height="16"><rect x="0.5" y="0.5" width="11" height="14" fill="#fff" stroke="#999" stroke-width="1"/><path d="M3,7.5 H9" stroke="#999" stroke-width="1"/></svg>
<div class="t" style="left:649.3px;top:828.74px;font-size:12px;line-height:12px;color:#333;font-weight:400;font-family:'Liberation Sans', sans-serif;width:158.5px;height:17px;overflow:hidden;">Dominion_logo.png</div>
<div style="left:626px;top:845px;width:182px;height:21px;background:#fff;overflow:hidden;"></div>
<svg style="left:632px;top:848px" width="13" height="16"><rect x="0.5" y="0.5" width="11" height="14" fill="#fff" stroke="#999" stroke-width="1"/><circle cx="6" cy="7.5" r="3.2" fill="#e06055"/><rect x="5.5" y="5.5" width="1" height="2.5" fill="#fff"/></svg>
<div class="t" style="left:649.3px;top:849.74px;font-size:12px;line-height:12px;color:#333;font-weight:400;font-family:'Liberation Sans', sans-serif;width:158.5px;height:17px;overflow:hidden;">error.gif</div>
<div style="left:626px;top:866px;width:182px;height:21px;background:#f4f4f4;overflow:hidden;"></div>
<svg style="left:632px;top:869px" width="13" height="16"><rect x="0.5" y="0.5" width="11" height="14" fill="#fff" stroke="#999" stroke-width="1"/><circle cx="6" cy="7.5" r="3.2" fill="#5b8fd0"/><rect x="5.5" y="6.5" width="1" height="2.5" fill="#fff"/></svg>
<div class="t" style="left:649.3px;top:870.74px;font-size:12px;line-height:12px;color:#333;font-weight:400;font-family:'Liberation Sans', sans-serif;width:158.5px;height:17px;overflow:hidden;">warning.gif</div>
<div style="left:626px;top:887px;width:182px;height:21px;background:#fff;overflow:hidden;"></div>
<svg style="left:632px;top:890px" width="13" height="16"><rect x="0.5" y="0.5" width="11" height="14" fill="#fff" stroke="#999" stroke-width="1"/><path d="M6,4 V11" stroke="#a8c8e8" stroke-width="1" stroke-dasharray="1,1.5"/></svg>
<div class="t" style="left:649.3px;top:891.74px;font-size:12px;line-height:12px;color:#333;font-weight:400;font-family:'Liberation Sans', sans-serif;width:158.5px;height:17px;overflow:hidden;">sprite.png</div>
<div style="left:626px;top:908px;width:182px;height:21px;background:#f4f4f4;overflow:hidden;"></div>
<svg style="left:632px;top:911px" width="13" height="16"><rect x="0.5" y="0.5" width="11" height="14" fill="#fff" stroke="#999" stroke-width="1"/><path d="M6,4.5 L9.5,10.5 H2.5 Z" fill="#f7a400"/></svg>
<div class="t" style="left:649.3px;top:912.74px;font-size:12px;line-height:12px;color:#333;font-weight:400;font-family:'Liberation Sans', sans-serif;width:158.5px;height:17px;overflow:hidden;">warning_64.png</div>
<div style="left:626px;top:929px;width:182px;height:21px;background:#fff;overflow:hidden;"></div>
<svg style="left:632px;top:932px" width="13" height="16"><rect x="0.5" y="0.5" width="11" height="14" fill="#fff" stroke="#999" stroke-width="1"/></svg>
<div class="t" style="left:649.3px;top:933.74px;font-size:12px;line-height:12px;color:#e22;font-weight:400;font-family:'Liberation Sans', sans-serif;width:158.5px;height:17px;overflow:hidden;">xforms-server</div>
<div style="left:626px;top:950px;width:182px;height:21px;background:#f4f4f4;overflow:hidden;"></div>
<svg style="left:632px;top:953px" width="13" height="16"><rect x="0.5" y="0.5" width="11" height="14" fill="#fff" stroke="#999" stroke-width="1"/></svg>
<div class="t" style="left:649.3px;top:954.74px;font-size:12px;line-height:12px;color:#e22;font-weight:400;font-family:'Liberation Sans', sans-serif;width:158.5px;height:17px;overflow:hidden;">xforms-server</div>
<div style="left:626px;top:971px;width:182px;height:21px;background:#3879d9;overflow:hidden;"></div>
<svg style="left:632px;top:974px" width="13" height="16"><rect x="0.5" y="0.5" width="11" height="14" fill="#fff" stroke="#1d4fa0" stroke-width="1"/></svg>
<div class="t" style="left:649.3px;top:975.74px;font-size:12px;line-height:12px;color:#fff;font-weight:400;font-family:'Liberation Sans', sans-serif;width:158.5px;height:17px;overflow:hidden;">xforms-server</div>
<div style="left:626px;top:992px;width:182px;height:21px;background:#f4f4f4;overflow:hidden;"></div>
<svg style="left:632px;top:995px" width="13" height="16"><rect x="0.5" y="0.5" width="11" height="14" fill="#fff" stroke="#999" stroke-width="1"/></svg>
<div class="t" style="left:649.3px;top:996.74px;font-size:12px;line-height:12px;color:#e22;font-weight:400;font-family:'Liberation Sans', sans-serif;width:158.5px;height:17px;overflow:hidden;">xforms-server</div>
<div style="left:626px;top:252px;width:182px;height:5px;background:#f4f4f4;"></div>
<div style="left:632px;top:252px;width:12px;height:2.5px;border:1px solid #8a8a8a;border-top:none;background:#fff;"></div>
<div style="left:651px;top:252px;width:3px;height:1.2px;background:#aaa;"></div>
<div style="left:722px;top:252px;width:2px;height:1.2px;background:#999;"></div>
<div style="left:808px;top:252px;width:17px;height:761px;background:#f1f1f1;"></div>
<svg style="left:808px;top:256px" width="17" height="12"><path d="M4.5,9 L8.5,4.5 L12.5,9 Z" fill="#505050"/></svg>
<div style="left:810px;top:650px;width:13px;height:345.7px;background:#c1c1c1;"></div>
<svg style="left:808px;top:998px" width="17" height="12"><path d="M4.5,3 L8.5,7.5 L12.5,3 Z" fill="#a3a3a3"/></svg>
<div style="left:626px;top:1013px;width:199px;height:27px;background:#f0f0f0;border-top:1px solid #cdcdcd;"></div>
<div class="t" style="left:631.5px;top:1022.61px;font-size:11.45px;line-height:11.45px;color:#333;font-weight:400;font-family:'Liberation Sans', sans-serif;">76 requests</div>
<div style="left:698.7px;top:1024px;width:1px;height:11px;background:#999;"></div>
<div class="t" style="left:707px;top:1022.61px;font-size:11.45px;line-height:11.45px;color:#333;font-weight:400;font-family:'Liberation Sans', sans-serif;">94.9 KB transferred</div>
<div style="left:813px;top:1024px;width:1.2px;height:8px;background:#bbb;"></div>
<div class="t" style="left:815.5px;top:1022.73px;font-size:11.3px;line-height:11.3px;color:#333;font-weight:400;font-family:'Liberation Sans', sans-serif;letter-spacing:-0.5px;">...</div>
<div style="left:826px;top:226px;width:1094px;height:26px;background:#fff;border-bottom:1px solid #cdcdcd;"></div>
<svg style="left:831px;top:236px" width="9" height="8"><path d="M0.8,0.5 L7.5,7 M7.5,0.5 L0.8,7" stroke="#333" stroke-width="1.3"/></svg>
<div style="left:845.4px;top:228.2px;width:53.2px;height:24px;background:#fff;border:1px solid #cdcdcd;border-bottom:1px solid #fff;"></div>
<div class="t" style="left:850.5px;top:235.83px;font-size:11.3px;line-height:11.3px;color:#333;font-weight:400;font-family:'Liberation Sans', sans-serif;">Headers</div>
<div class="t" style="left:904.5px;top:235.83px;font-size:11.3px;line-height:11.3px;color:#333;font-weight:400;font-family:'Liberation Sans', sans-serif;">Preview</div>
<div class="t" style="left:955.5px;top:235.83px;font-size:11.3px;line-height:11.3px;color:#333;font-weight:400;font-family:'Liberation Sans', sans-serif;">Response</div>
<div class="t" style="left:1016px;top:235.83px;font-size:11.3px;line-height:11.3px;color:#333;font-weight:400;font-family:'Liberation Sans', sans-serif;">Cookies</div>
<div class="t" style="left:1067.8px;top:235.83px;font-size:11.3px;line-height:11.3px;color:#333;font-weight:400;font-family:'Liberation Sans', sans-serif;">Timing</div>
<svg style="left:834px;top:260.75px" width="9" height="8"><path d="M0.5,0.5 H8 L4.25,7.5 Z" fill="#6e6e6e"/></svg>
<div class="t" style="left:845.4px;top:259.71px;font-size:11.5px;line-height:11.5px;color:#3a3a3a;font-weight:700;font-family:'Liberation Sans', sans-serif;">General</div>
<div class="t" style="left:854.5px;top:277.46px;font-size:11.5px;line-height:11.5px;color:#3a3a3a;font-weight:700;font-family:'Liberation Sans', sans-serif;">Request URL:</div>
<div class="t" style="left:935px;top:278.77px;font-size:11px;line-height:11px;color:#303030;font-weight:400;font-family:'Liberation Mono', monospace;">https://tcwas-bmsgateway-dev2.travelerscanada.ca/FormsServer/orbeon/xforms-server</div>
<div class="t" style="left:854.5px;top:294.56px;font-size:11.5px;line-height:11.5px;color:#3a3a3a;font-weight:700;font-family:'Liberation Sans', sans-serif;">Request Method:</div>
<div class="t" style="left:957.1px;top:295.87px;font-size:11px;line-height:11px;color:#303030;font-weight:400;font-family:'Liberation Mono', monospace;">POST</div>
<div class="t" style="left:854.5px;top:311.66px;font-size:11.5px;line-height:11.5px;color:#3a3a3a;font-weight:700;font-family:'Liberation Sans', sans-serif;">Status Code:</div>
<svg style="left:929px;top:311px" width="12" height="12"><defs><radialGradient id="gd" cx=".4" cy=".35" r=".6"><stop offset="0" stop-color="#8ef08e"/><stop offset=".6" stop-color="#1fbf1f"/><stop offset="1" stop-color="#0a9a0a"/></radialGradient></defs><circle cx="5.5" cy="5.5" r="5" fill="url(#gd)"/></svg>
<div class="t" style="left:945.3px;top:312.97px;font-size:11px;line-height:11px;color:#303030;font-weight:400;font-family:'Liberation Mono', monospace;">200 OK</div>
<div class="t" style="left:854.5px;top:328.76px;font-size:11.5px;line-height:11.5px;color:#3a3a3a;font-weight:700;font-family:'Liberation Sans', sans-serif;">Remote Address:</div>
<div class="t" style="left:955.7px;top:330.07px;font-size:11px;line-height:11px;color:#303030;font-weight:400;font-family:'Liberation Mono', monospace;">204.144.19.87:443</div>
<div class="t" style="left:854.5px;top:345.86px;font-size:11.5px;line-height:11.5px;color:#3a3a3a;font-weight:700;font-family:'Liberation Sans', sans-serif;">Referrer Policy:</div>
<div class="t" style="left:946.7px;top:347.17px;font-size:11px;line-height:11px;color:#303030;font-weight:400;font-family:'Liberation Mono', monospace;">no-referrer-when-downgrade</div>
<div style="left:834px;top:363px;width:1086px;height:1px;background:#e0e0e0;"></div>
<svg style="left:834px;top:370.8px" width="9" height="8"><path d="M0.5,0.5 H8 L4.25,7.5 Z" fill="#6e6e6e"/></svg>
<div class="t" style="left:845.4px;top:369.76px;font-size:11.5px;line-height:11.5px;color:#3a3a3a;font-weight:700;font-family:'Liberation Sans', sans-serif;">Response Headers</div>
<div class="t" style="left:978px;top:369.93px;font-size:11.3px;line-height:11.3px;color:#8a8a8a;font-weight:400;font-family:'Liberation Sans', sans-serif;">view source</div>
<div class="t" style="left:854.5px;top:387.66px;font-size:11.5px;line-height:11.5px;color:#3a3a3a;font-weight:700;font-family:'Liberation Sans', sans-serif;">Cache-Control:</div>
<div class="t" style="left:943.7px;top:388.97px;font-size:11px;line-height:11px;color:#303030;font-weight:400;font-family:'Liberation Mono', monospace;">private, max-age=0</div>
<div class="t" style="left:854.5px;top:404.66px;font-size:11.5px;line-height:11.5px;color:#3a3a3a;font-weight:700;font-family:'Liberation Sans', sans-serif;">Connection:</div>
<div class="t" style="left:927.3px;top:405.97px;font-size:11px;line-height:11px;color:#303030;font-weight:400;font-family:'Liberation Mono', monospace;">close</div>
<div class="t" style="left:854.5px;top:421.66px;font-size:11.5px;line-height:11.5px;color:#3a3a3a;font-weight:700;font-family:'Liberation Sans', sans-serif;">Content-Language:</div>
<div class="t" style="left:968.2px;top:422.97px;font-size:11px;line-height:11px;color:#303030;font-weight:400;font-family:'Liberation Mono', monospace;">en-US</div>
<div class="t" style="left:854.5px;top:438.66px;font-size:11.5px;line-height:11.5px;color:#3a3a3a;font-weight:700;font-family:'Liberation Sans', sans-serif;">Content-Type:</div>
<div class="t" style="left:940.8px;top:439.97px;font-size:11px;line-height:11px;color:#303030;font-weight:400;font-family:'Liberation Mono', monospace;">application/xml; charset=utf-8</div>
<div class="t" style="left:854.5px;top:455.66px;font-size:11.5px;line-height:11.5px;color:#3a3a3a;font-weight:700;font-family:'Liberation Sans', sans-serif;">Date:</div>
<div class="t" style="left:890px;top:456.97px;font-size:11px;line-height:11px;color:#303030;font-weight:400;font-family:'Liberation Mono', monospace;">Fri, 23 Jun 2017 18:42:04 GMT</div>
<div class="t" style="left:854.5px;top:472.66px;font-size:11.5px;line-height:11.5px;color:#3a3a3a;font-weight:700;font-family:'Liberation Sans', sans-serif;">Expires:</div>
<div class="t" style="left:904px;top:473.97px;font-size:11px;line-height:11px;color:#303030;font-weight:400;font-family:'Liberation Mono', monospace;">Fri, 23 Jun 2017 18:42:04 GMT</div>
<div class="t" style="left:854.5px;top:489.66px;font-size:11.5px;line-height:11.5px;color:#3a3a3a;font-weight:700;font-family:'Liberation Sans', sans-serif;">Last-Modified:</div>
<div class="t" style="left:942.2px;top:490.97px;font-size:11px;line-height:11px;color:#303030;font-weight:400;font-family:'Liberation Mono', monospace;">Fri, 23 Jun 2017 18:42:04 GMT</div>
<div class="t" style="left:854.5px;top:506.66px;font-size:11.5px;line-height:11.5px;color:#3a3a3a;font-weight:700;font-family:'Liberation Sans', sans-serif;">Server:</div>
<div class="t" style="left:898.4px;top:507.97px;font-size:11px;line-height:11px;color:#303030;font-weight:400;font-family:'Liberation Mono', monospace;">Microsoft-IIS/7.5</div>
<div class="t" style="left:854.5px;top:523.66px;font-size:11.5px;line-height:11.5px;color:#3a3a3a;font-weight:700;font-family:'Liberation Sans', sans-serif;">X-Powered-By:</div>
<div class="t" style="left:944.6px;top:524.97px;font-size:11px;line-height:11px;color:#303030;font-weight:400;font-family:'Liberation Mono', monospace;">Servlet/3.0</div>
<div class="t" style="left:854.5px;top:540.66px;font-size:11.5px;line-height:11.5px;color:#3a3a3a;font-weight:700;font-family:'Liberation Sans', sans-serif;">X-Powered-By:</div>
<div class="t" style="left:944.6px;top:541.97px;font-size:11px;line-height:11px;color:#303030;font-weight:400;font-family:'Liberation Mono', monospace;">ASP.NET</div>
<div style="left:834px;top:558px;width:1086px;height:1px;background:#e0e0e0;"></div>
<svg style="left:834px;top:565.8px" width="9" height="8"><path d="M0.5,0.5 H8 L4.25,7.5 Z" fill="#6e6e6e"/></svg>
<div class="t" style="left:845.4px;top:564.76px;font-size:11.5px;line-height:11.5px;color:#3a3a3a;font-weight:700;font-family:'Liberation Sans', sans-serif;">Request Headers</div>
<div class="t" style="left:970px;top:564.93px;font-size:11.3px;line-height:11.3px;color:#8a8a8a;font-weight:400;font-family:'Liberation Sans', sans-serif;">view source</div>
<div class="t" style="left:854.5px;top:582.46px;font-size:11.5px;line-height:11.5px;color:#3a3a3a;font-weight:700;font-family:'Liberation Sans', sans-serif;">Accept:</div>
<div class="t" style="left:901.9px;top:583.77px;font-size:11px;line-height:11px;color:#303030;font-weight:400;font-family:'Liberation Mono', monospace;">*/*</div>
<div class="t" style="left:854.5px;top:599.49px;font-size:11.5px;line-height:11.5px;color:#3a3a3a;font-weight:700;font-family:'Liberation Sans', sans-serif;">Accept-Encoding:</div>
<div class="t" style="left:959.2px;top:600.80px;font-size:11px;line-height:11px;color:#303030;font-weight:400;font-family:'Liberation Mono', monospace;">gzip, deflate, br</div>
<div class="t" style="left:854.5px;top:616.52px;font-size:11.5px;line-height:11.5px;color:#3a3a3a;font-weight:700;font-family:'Liberation Sans', sans-serif;">Accept-Language:</div>
<div class="t" style="left:961.5px;top:617.83px;font-size:11px;line-height:11px;color:#303030;font-weight:400;font-family:'Liberation Mono', monospace;">en-US,en;q=0.8</div>
<div class="t" style="left:854.5px;top:633.55px;font-size:11.5px;line-height:11.5px;color:#3a3a3a;font-weight:700;font-family:'Liberation Sans', sans-serif;">Connection:</div>
<div class="t" style="left:927.7px;top:634.86px;font-size:11px;line-height:11px;color:#303030;font-weight:400;font-family:'Liberation Mono', monospace;">keep-alive</div>
<div class="t" style="left:854.5px;top:650.58px;font-size:11.5px;line-height:11.5px;color:#3a3a3a;font-weight:700;font-family:'Liberation Sans', sans-serif;">Content-Length:</div>
<div class="t" style="left:952.7px;top:651.89px;font-size:11px;line-height:11px;color:#303030;font-weight:400;font-family:'Liberation Mono', monospace;">377</div>
<div class="t" style="left:854.5px;top:667.61px;font-size:11.5px;line-height:11.5px;color:#3a3a3a;font-weight:700;font-family:'Liberation Sans', sans-serif;">Content-Type:</div>
<div class="t" style="left:941.2px;top:668.92px;font-size:11px;line-height:11px;color:#303030;font-weight:400;font-family:'Liberation Mono', monospace;">application/xml</div>
<div class="t" style="left:854.5px;top:684.64px;font-size:11.5px;line-height:11.5px;color:#3a3a3a;font-weight:700;font-family:'Liberation Sans', sans-serif;">Cookie:</div>
<div class="t" style="left:901.9px;top:685.95px;font-size:11px;line-height:11px;color:#303030;font-weight:400;font-family:'Liberation Mono', monospace;">CoreID6=17332094562714974511691&amp;ci=90287305; S2_BMSFormsSESSIONID=0000py0cphE58uwnWdFzfsqmSoa:-1</div>
<div class="t" style="left:854.5px;top:701.67px;font-size:11.5px;line-height:11.5px;color:#3a3a3a;font-weight:700;font-family:'Liberation Sans', sans-serif;">Host:</div>
<div class="t" style="left:890px;top:702.98px;font-size:11px;line-height:11px;color:#303030;font-weight:400;font-family:'Liberation Mono', monospace;">tcwas-bmsgateway-dev2.travelerscanada.ca</div>
<div class="t" style="left:854.5px;top:718.70px;font-size:11.5px;line-height:11.5px;color:#3a3a3a;font-weight:700;font-family:'Liberation Sans', sans-serif;">Origin:</div>
<div class="t" style="left:898.8px;top:720.01px;font-size:11px;line-height:11px;color:#303030;font-weight:400;font-family:'Liberation Mono', monospace;">https://tcwas-bmsgateway-dev2.travelerscanada.ca</div>
<div class="t" style="left:854.5px;top:735.73px;font-size:11.5px;line-height:11.5px;color:#3a3a3a;font-weight:700;font-family:'Liberation Sans', sans-serif;">Referer:</div>
<div class="t" style="left:904.6px;top:737.04px;font-size:11px;line-height:11px;color:#303030;font-weight:400;font-family:'Liberation Mono', monospace;">https://tcwas-bmsgateway-dev2.travelerscanada.ca/FormsServer/orbeon/xforms-server-submit</div>
<div class="t" style="left:854.5px;top:752.76px;font-size:11.5px;line-height:11.5px;color:#3a3a3a;font-weight:700;font-family:'Liberation Sans', sans-serif;">User-Agent:</div>
<div class="t" style="left:927.7px;top:754.07px;font-size:11px;line-height:11px;color:#303030;font-weight:400;font-family:'Liberation Mono', monospace;">Mozilla/5.0 (Windows NT 6.1; Win64; x64) AppleWebKit/537.36 (KHTML, like Gecko) Chrome/58.0.3029.110 Safari/537.36</div>
<div class="t" style="left:854.5px;top:769.79px;font-size:11.5px;line-height:11.5px;color:#3a3a3a;font-weight:700;font-family:'Liberation Sans', sans-serif;">X-Requested-With:</div>
<div class="t" style="left:967.3px;top:771.10px;font-size:11px;line-height:11px;color:#303030;font-weight:400;font-family:'Liberation Mono', monospace;">XMLHttpRequest</div>
<div style="left:834px;top:787px;width:1086px;height:1px;background:#e0e0e0;"></div>
<svg style="left:834px;top:794.4px" width="9" height="8"><path d="M0.5,0.5 H8 L4.25,7.5 Z" fill="#6e6e6e"/></svg>
<div class="t" style="left:845.4px;top:793.36px;font-size:11.5px;line-height:11.5px;color:#3a3a3a;font-weight:700;font-family:'Liberation Sans', sans-serif;">Request Payload</div>
<div class="t" style="left:854.5px;top:812.77px;font-size:11px;line-height:11px;color:#303030;font-weight:400;font-family:'Liberation Mono', monospace;">&lt;!DOCTYPE xxf:event-request [&lt;!ENTITY nbsp "&amp;#160;"&gt;]&gt;</div>
<div class="t" style="left:854.5px;top:828.77px;font-size:11px;line-height:11px;color:#303030;font-weight:400;font-family:'Liberation Mono', monospace;">&lt;xxf:event-request xmlns:xxf="http://orbeon.org/oxf/xml/xforms"&gt;</div>
<div class="t" style="left:881.2px;top:844.77px;font-size:11px;line-height:11px;color:#303030;font-weight:400;font-family:'Liberation Mono', monospace;">&lt;xxf:uuid&gt;a314106c3d75323768f0d4d8e155079626f74419&lt;/xxf:uuid&gt;</div>
<div class="t" style="left:881.2px;top:860.77px;font-size:11px;line-height:11px;color:#303030;font-weight:400;font-family:'Liberation Mono', monospace;">&lt;xxf:sequence&gt;&lt;/xxf:sequence&gt;</div>
<div class="t" style="left:881.2px;top:876.77px;font-size:11px;line-height:11px;color:#303030;font-weight:400;font-family:'Liberation Mono', monospace;">&lt;xxf:action&gt;</div>
<div class="t" style="left:907.6px;top:892.77px;font-size:11px;line-height:11px;color:#303030;font-weight:400;font-family:'Liberation Mono', monospace;">&lt;xxf:event name="xxforms-session-heartbeat" source-control-id="xforms-heartbeat"&gt;&lt;/xxf:event&gt;</div>
<div class="t" style="left:881.2px;top:908.77px;font-size:11px;line-height:11px;color:#303030;font-weight:400;font-family:'Liberation Mono', monospace;">&lt;/xxf:action&gt;</div>
<div class="t" style="left:854.5px;top:924.77px;font-size:11px;line-height:11px;color:#303030;font-weight:400;font-family:'Liberation Mono', monospace;">&lt;/xxf:event-request&gt;</div>
</body></html>
